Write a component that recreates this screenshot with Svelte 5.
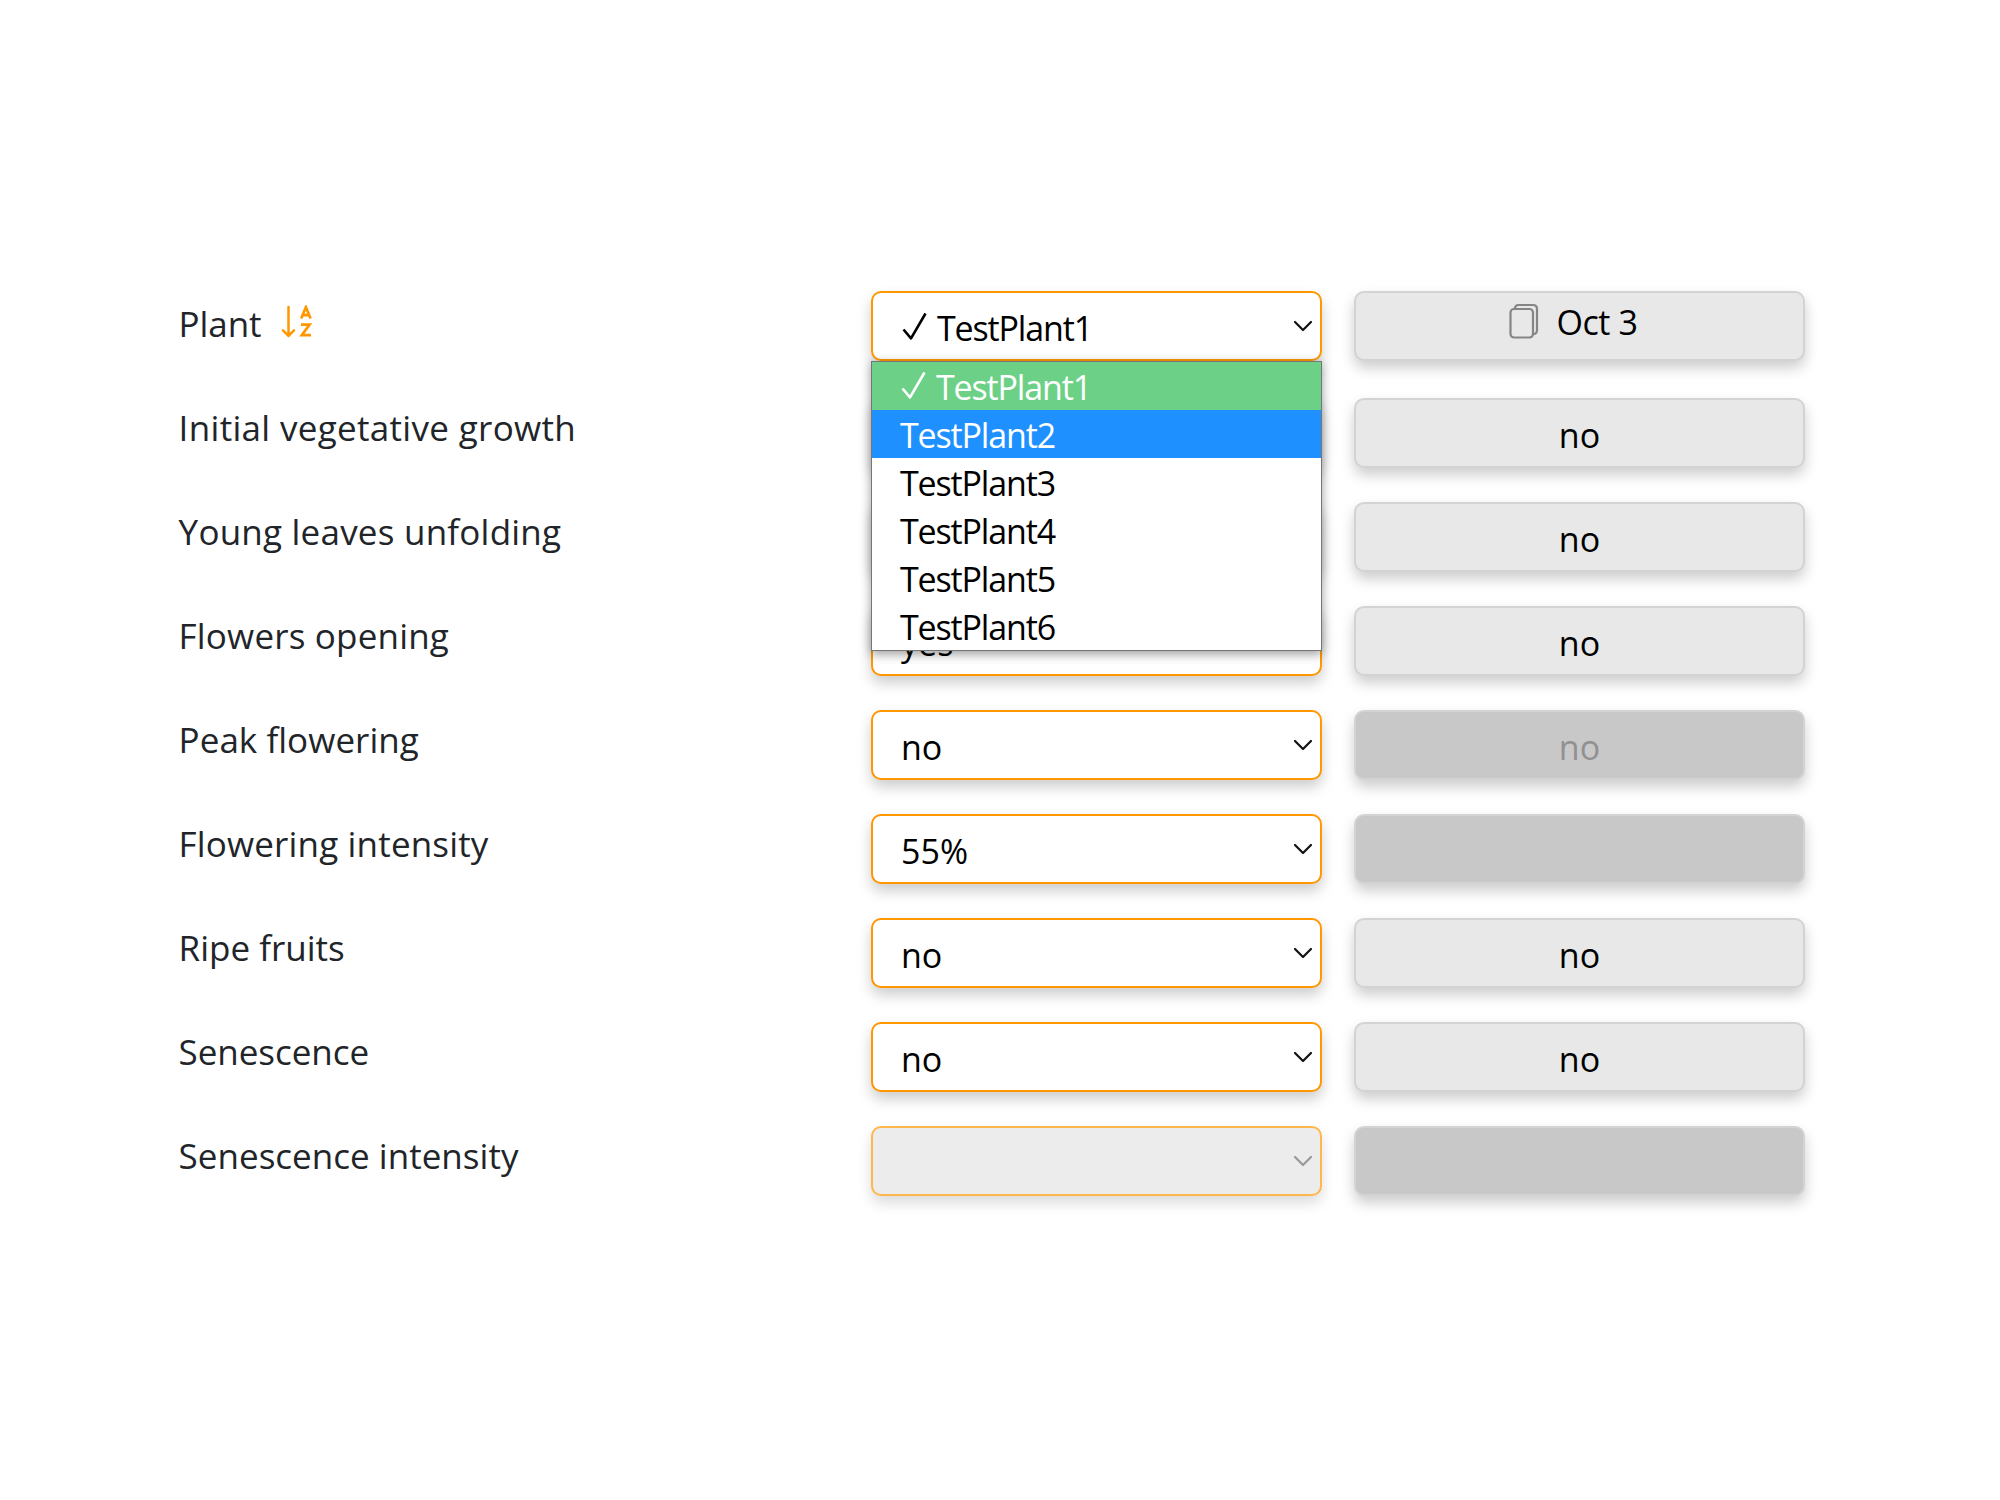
<script>
  // tracking: letter spacing of the label, in px
  const rows = [
    { label: 'Plant', tracking: -0.1, value: 'TestPlant1', side: 'Oct 3', first: true },
    { label: 'Initial vegetative growth', tracking: 0.32, value: '', side: 'no' },
    { label: 'Young leaves unfolding', tracking: 0.22, value: '', side: 'no' },
    { label: 'Flowers opening', tracking: 0.18, value: 'yes', side: 'no' },
    { label: 'Peak flowering', tracking: 0.04, value: 'no', side: 'no', muted: true },
    { label: 'Flowering intensity', tracking: 0.16, value: '55%', side: '', muted: true },
    { label: 'Ripe fruits', tracking: 0, value: 'no', side: 'no' },
    { label: 'Senescence', tracking: -0.05, value: 'no', side: 'no' },
    { label: 'Senescence intensity', tracking: 0.02, value: '', side: '', muted: true, disabled: true }
  ];
  const options = ['TestPlant1', 'TestPlant2', 'TestPlant3', 'TestPlant4', 'TestPlant5', 'TestPlant6'];
</script>

{#snippet check()}
  <svg class="check" width="36" height="30" viewBox="0 0 36 30" fill="none" stroke="currentColor" stroke-linejoin="round">
    <path d="M2.5 18.5 L10 27.3 L24.5 2.5" stroke-width="2.6" />
  </svg>
{/snippet}

<main>
  {#each rows as row}
    <div class="row" class:first={row.first}>
      <div class="label">
        <span style="letter-spacing: {row.tracking}px">{row.label}</span>
        {#if row.first}
          <svg class="sort" width="32" height="34" viewBox="0 0 32 34" fill="none" stroke="#ff9800">
            <path d="M7.5 2 V31 M2 25.3 L7.5 30.8 L13 25.3" stroke-width="2.5" stroke-linecap="round" stroke-linejoin="round" />
            <path d="M20.2 13.6 L24.9 2.2 L29.6 13.6 M21.8 10.2 H28" stroke-width="2.7" />
            <path d="M20 19.6 H28.6 L20.8 30.2 H30" stroke-width="2.7" />
          </svg>
        {/if}
      </div>
      <div class="box select" class:disabled={row.disabled}>
        <span class="value" class:plant={row.first}>{#if row.first}{@render check()}{/if}{row.value}</span>
        <svg class="chevron" width="20" height="14" viewBox="0 0 20 14" fill="none" stroke-width="2.2" stroke-linecap="round" stroke-linejoin="round">
          <path d="M2 3 L10 11 L18 3" />
        </svg>
        {#if row.first}
          <ul class="menu">
            {#each options as option, i}
              <li class:chosen={i === 0} class:hover={i === 1}>{#if i === 0}{@render check()}{/if}{option}</li>
            {/each}
          </ul>
        {/if}
      </div>
      <div class="box side" class:muted={row.muted}>
        {#if row.first}
          <svg class="copy" width="30" height="36" viewBox="0 0 30 36" fill="none" stroke="#858585" stroke-width="2.2">
            <rect x="1.5" y="6" width="22.5" height="28.5" rx="3.5" />
            <path d="M6 5.5 C6 3 7 2 9.5 2 H24 C27 2 28 3 28 6 V27 C28 29.5 27 31 24.5 31" />
          </svg>
        {/if}
        <span>{row.side}</span>
      </div>
    </div>
  {/each}
</main>

<style>
  :global(body) {
    margin: 0;
    background: #fff;
  }
  main {
    box-sizing: border-box;
    width: 2000px;
    height: 1500px;
    padding: 291px 195px 0 178px;
    font-family: 'Segoe UI', 'Open Sans', 'Noto Sans', sans-serif;
    font-size: 34px;
    color: #000;
  }
  .row {
    display: grid;
    grid-template-columns: 661px 451px 451px;
    grid-template-rows: 70px;
    column-gap: 32px;
    height: 70px;
    margin-bottom: 34px;
  }
  .row.first {
    margin-bottom: 37px;
  }
  .label {
    display: flex;
    padding-left: 0.6px;
    font-size: 35px;
    line-height: 60px;
    color: #212529;
    white-space: nowrap;
  }
  .first .label {
    padding-top: 3px;
  }
  .sort {
    margin: 11px 0 0 19.5px;
  }
  .box {
    box-sizing: border-box;
    display: flex;
    height: 70px;
    border: 2px solid #ff9800;
    border-radius: 10px;
    box-shadow: 0 7px 14px rgba(0, 0, 0, 0.2);
    line-height: 70px;
    background: #fff;
  }
  .select {
    position: relative;
    align-items: center;
    justify-content: space-between;
    padding: 0 7px 0 28px;
  }
  .value {
    padding-top: 4px;
    white-space: nowrap;
  }
  .plant,
  li {
    letter-spacing: -1.15px;
  }
  .chevron {
    stroke: #111;
  }
  .disabled {
    border-color: #ffb74d;
    box-shadow: 0 7px 14px rgba(0, 0, 0, 0.14);
    background: #ececec;
  }
  .disabled .chevron {
    stroke: #999;
  }
  .side {
    justify-content: center;
    border-color: #d3d3d3;
    background: #e8e8e8;
  }
  .side.muted {
    background: #c8c8c8;
    color: #919191;
  }
  .first .side {
    padding-right: 12px;
    line-height: 59px;
    letter-spacing: -0.4px;
  }
  .copy {
    margin: 10px 17px 0 0;
  }
  .menu {
    position: absolute;
    z-index: 2;
    top: 68px;
    left: -2px;
    box-sizing: border-box;
    width: 451px;
    margin: 0;
    padding: 0;
    border: 1px solid #767676;
    list-style: none;
    background: #fff;
    box-shadow: 0 3px 10px rgba(0, 0, 0, 0.4);
  }
  li {
    height: 48px;
    padding-left: 28px;
    line-height: 50px;
  }
  .chosen {
    background: #6dd087;
    color: #fff;
  }
  .hover {
    background: #1e90ff;
    color: #fff;
  }
</style>
